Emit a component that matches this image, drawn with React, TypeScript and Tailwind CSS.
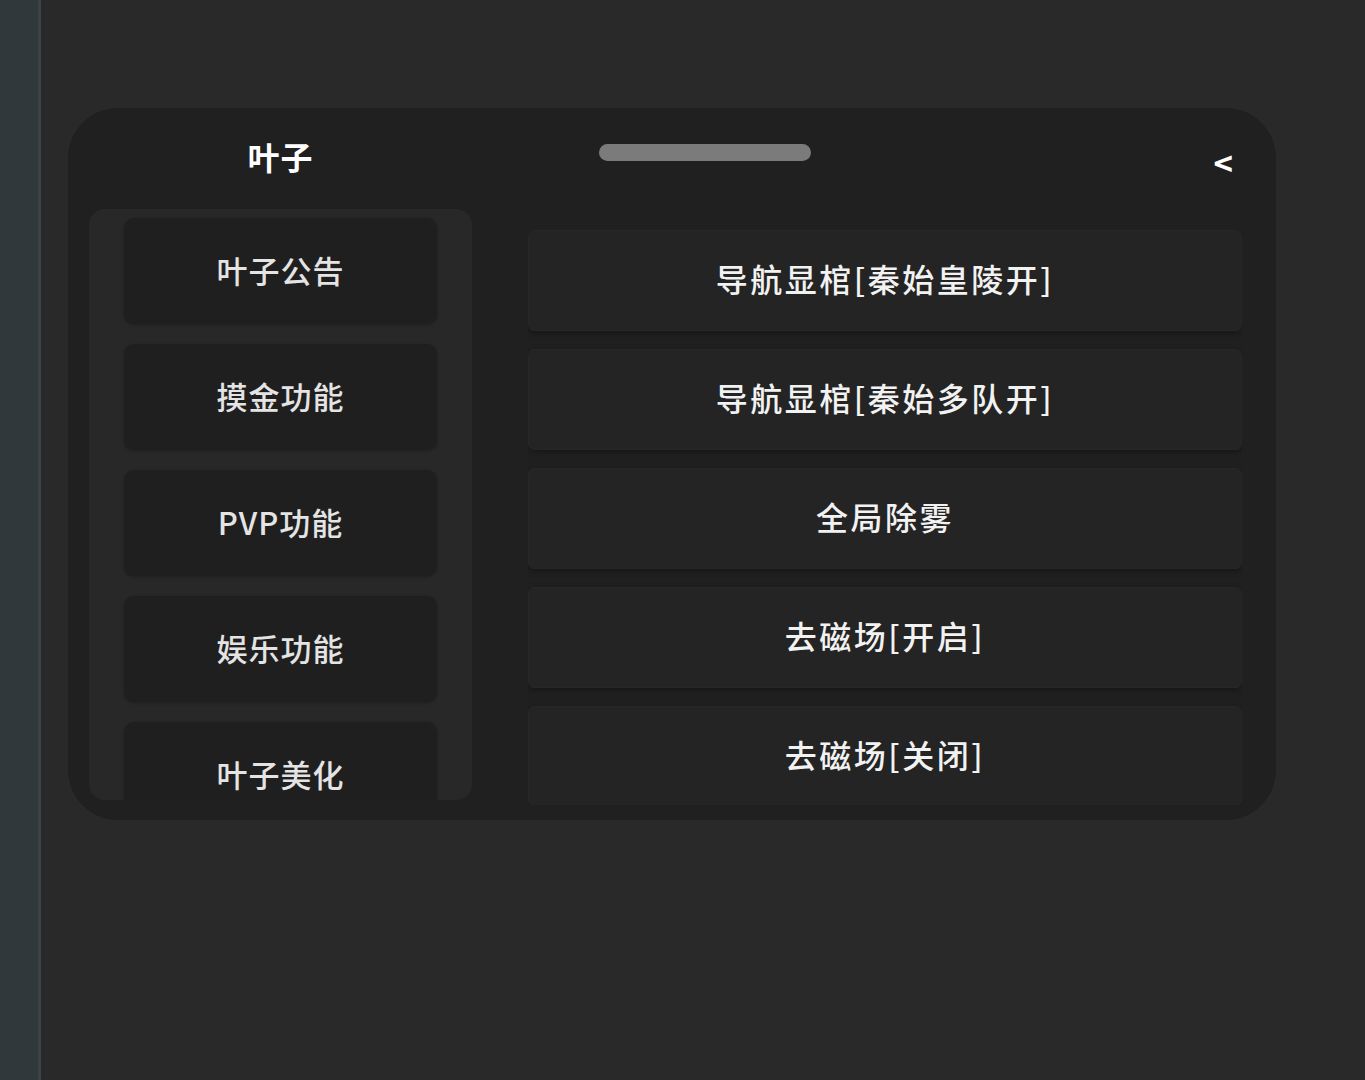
import React from 'react';

const FONT = '"Noto Sans CJK SC", "Noto Sans", sans-serif';

const menuItems = ['叶子公告', '摸金功能', 'PVP功能', '娱乐功能', '叶子美化'];

const actions = [
  '导航显棺[秦始皇陵开]',
  '导航显棺[秦始多队开]',
  '全局除雾',
  '去磁场[开启]',
  '去磁场[关闭]',
];

export default function App() {
  return (
    <div className="flex h-[1080px] w-full overflow-hidden" style={{ fontFamily: FONT }}>
      <div className="h-full w-[38px] shrink-0 bg-[#30383b]" />
      <div className="h-full w-[3px] shrink-0 bg-[#3b4345]" />
      <main className="flex-1 bg-[#292929] pl-[27px] pt-[108px]">
        <section className="flex h-[712px] w-[1208px] flex-col overflow-hidden rounded-[50px] bg-[#202020] pb-[15px] pl-[21px] pr-[34px]">
          <header className="flex h-[101px] shrink-0 items-start">
            <h1 className="w-[383px] pt-[28px] text-center text-[32px] font-bold leading-[40px] tracking-[1px] text-white">
              叶子
            </h1>
            <div className="ml-[127px] mt-[36px] h-[17px] w-[212px] rounded-full bg-[#7b7b7b]" />
            <span className="ml-auto mr-[9px] mt-[34px] text-[33px] font-bold leading-[40px] text-white">
              &lt;
            </span>
          </header>

          <div className="flex min-h-0 flex-1 gap-[56px]">
            <nav className="mb-[5px] w-[383px] shrink-0 overflow-hidden rounded-[16px] bg-[#282828] px-[35px] pt-[9px]">
              <div className="flex flex-col gap-[20px]">
                {menuItems.map((item) => (
                  <button
                    key={item}
                    className="flex h-[106px] shrink-0 items-center justify-center rounded-[10px] bg-[#1f1f1f] pb-[2px] text-[31px] font-medium tracking-[1px] text-[#e4e4e4] shadow-[0_1px_3px_rgba(0,0,0,0.25)]"
                  >
                    {item}
                  </button>
                ))}
              </div>
            </nav>

            <div className="mt-[21px] flex-1 overflow-hidden">
              <div className="flex flex-col gap-[18px]">
                {actions.map((action) => (
                  <button
                    key={action}
                    className="flex h-[101px] shrink-0 items-center justify-center rounded-[6px] border border-[#262726] bg-[#232423] pb-[5px] text-[32px] font-medium tracking-[2.5px] text-[#f2f2f2] shadow-[0_2px_6px_rgba(0,0,0,0.35)]"
                  >
                    {action}
                  </button>
                ))}
              </div>
            </div>
          </div>
        </section>
      </main>
    </div>
  );
}
